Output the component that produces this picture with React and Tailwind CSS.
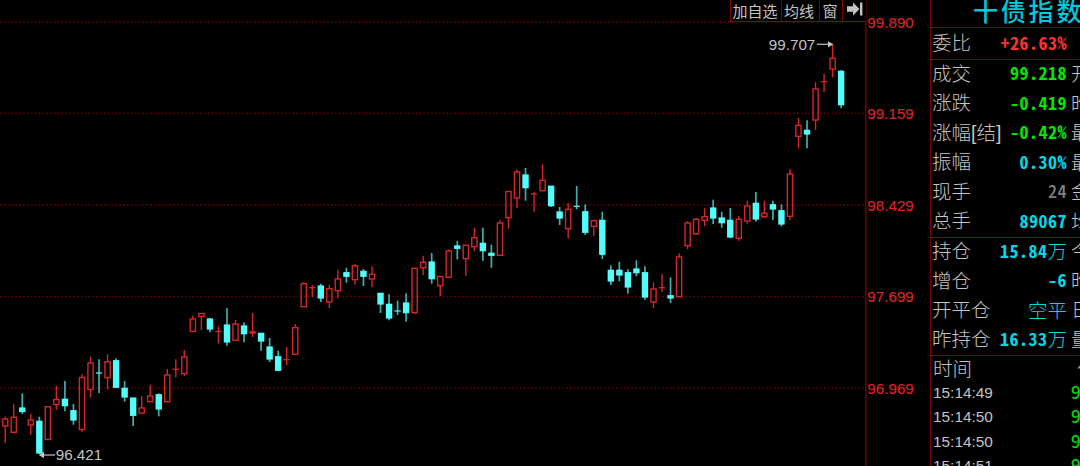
const STEP = 8.53;
const START_X = 5.2;

// [direction, high, body top, body bottom, low]
const candles = [
  ['u', 416.5, 419, 426, 443],
  ['u', 404.3, 417.3, 432.3, 433.5],
  ['d', 393.5, 408, 411.5, 414],
  ['u', 414, 420, 425, 434.7],
  ['d', 416.7, 421.3, 453, 454],
  ['u', 406, 406.8, 439.5, 439.5],
  ['u', 386, 399.5, 404.5, 410],
  ['d', 381, 399.3, 405.7, 411.3],
  ['d', 404, 410.7, 420, 424.7],
  ['u', 374, 377.5, 429.5, 432],
  ['u', 356.7, 363, 389.5, 397.7],
  ['d', 359.3, 373, 373, 393],
  ['u', 354.3, 361.7, 377.7, 389.3],
  ['d', 358.3, 360.7, 387.3, 387.3],
  ['d', 381, 388.3, 397, 401.7],
  ['d', 398, 398, 415.3, 426],
  ['u', 396, 408, 413, 413],
  ['u', 384.7, 396, 401.7, 401.7],
  ['d', 393.3, 394.7, 409, 416.3],
  ['u', 369, 375, 401.7, 401.7],
  ['u', 359.3, 369.3, 369.3, 377.3],
  ['u', 349.7, 357, 373.7, 375.7],
  ['u', 315.7, 319, 331.3, 332.3],
  ['u', 313.5, 313.5, 316.5, 330],
  ['d', 318, 319, 329, 332.3],
  ['u', 326.4, 331.4, 331.4, 343.5],
  ['d', 308, 325, 342, 345.7],
  ['u', 320, 324, 340.3, 340.3],
  ['d', 322.3, 326, 333.7, 342.3],
  ['u', 313, 331.8, 333, 337],
  ['d', 333.3, 333.3, 341, 350.7],
  ['d', 338, 347, 359, 362],
  ['d', 350.7, 356.7, 370.3, 370.3],
  ['u', 347, 359.7, 359.7, 365.3],
  ['u', 324, 327.7, 354.3, 354.3],
  ['u', 282.3, 283.7, 306.7, 306.7],
  ['u', 285, 287.7, 287.7, 297],
  ['d', 283.7, 286, 298, 302],
  ['u', 285, 288.7, 302, 308],
  ['u', 270.3, 279, 290.7, 298.3],
  ['d', 267.7, 272.7, 276.3, 282.7],
  ['u', 264, 265.7, 279.7, 284.7],
  ['d', 269, 271.3, 276.3, 286],
  ['u', 266.3, 274.3, 279, 287],
  ['d', 293.3, 293.3, 304, 313],
  ['d', 294.3, 304.3, 318, 320.3],
  ['d', 300.7, 311, 311, 315],
  ['d', 293.3, 303, 312.7, 321.7],
  ['u', 268, 268.3, 312.7, 313.7],
  ['u', 255.7, 262.3, 267.7, 275],
  ['d', 253, 262, 278.7, 283.7],
  ['u', 276.5, 276.5, 285.7, 296],
  ['u', 249.3, 251, 277.3, 277.3],
  ['d', 241, 246, 248.3, 259.3],
  ['u', 245, 245.3, 258.7, 276],
  ['u', 227.7, 237.7, 246.7, 251],
  ['d', 227.7, 243.3, 250.7, 260.7],
  ['d', 244.7, 253.3, 255.3, 267.7],
  ['u', 220, 223, 255.3, 255.3],
  ['u', 191.3, 191.5, 217.7, 228.7],
  ['u', 169.3, 172, 198, 208],
  ['d', 168, 175, 187.7, 200.7],
  ['u', 192.3, 194, 194, 211.7],
  ['u', 164.3, 180.3, 190.7, 190.7],
  ['d', 186.2, 186.2, 205.7, 207],
  ['d', 207, 212, 218, 225],
  ['u', 203, 209.3, 228.7, 238.3],
  ['d', 186, 206.3, 206.3, 209.3],
  ['d', 204.3, 211.7, 232.3, 235],
  ['u', 219.3, 220.7, 226.3, 236],
  ['d', 211.7, 220.3, 254.3, 259],
  ['d', 265.3, 270.3, 281, 285],
  ['d', 261.7, 270.3, 275, 281.3],
  ['d', 269.3, 272.7, 287, 293.7],
  ['d', 260.3, 269, 272.7, 276.3],
  ['d', 266.3, 272.7, 297, 299.7],
  ['u', 282.3, 289, 302, 308],
  ['u', 274, 287.7, 287.7, 292],
  ['d', 277.3, 295.7, 298, 303],
  ['u', 253.3, 257, 296.7, 296.7],
  ['u', 221, 223, 245.7, 249.3],
  ['u', 218, 219.3, 233.7, 235],
  ['u', 208.3, 216.7, 220.3, 226.3],
  ['d', 199.7, 208, 218, 224],
  ['d', 211.7, 218, 222.7, 227.7],
  ['d', 208, 220.3, 237, 238.3],
  ['u', 215.7, 219.3, 238.3, 240.7],
  ['u', 200.7, 206, 221, 223.7],
  ['d', 192, 203.3, 219, 221.7],
  ['u', 200.7, 213.3, 216.7, 218],
  ['d', 200.7, 204.7, 209, 220],
  ['d', 204.3, 210.7, 224, 226.3],
  ['u', 169, 174, 216.3, 220],
  ['u', 118, 125.3, 136.3, 148.3],
  ['d', 120.3, 130.3, 134, 148.3],
  ['u', 82.3, 89, 120, 130],
  ['u', 74, 81.7, 81.7, 92.3],
  ['u', 45, 58.3, 69, 77.3],
  ['d', 70.3, 71.3, 104.7, 108.3],
];

const levels = [
  { price: '99.890', y: 22 },
  { price: '99.159', y: 113.5 },
  { price: '98.429', y: 205 },
  { price: '97.699', y: 296.5 },
  { price: '96.969', y: 388 },
];

const quoteGroups = [
  {
    height: 'h-[32px] pt-[1px]',
    rows: [{ label: '委比', value: '+26.63%', color: 'font-bold text-[#ff3232]', next: '' }],
  },
  {
    height: 'h-[178px]',
    rows: [
      { label: '成交', value: '99.218', color: 'font-bold text-[#00e600]', next: '开' },
      { label: '涨跌', value: '-0.419', color: 'font-bold text-[#00e600]', next: '昨' },
      { label: '涨幅[结]', value: '-0.42%', color: 'font-bold text-[#00e600]', next: '最' },
      { label: '振幅', value: '0.30%', color: 'font-bold text-[#00d8e8]', next: '最' },
      { label: '现手', value: '24', color: 'font-medium text-[#808080]', next: '金' },
      { label: '总手', value: '89067', color: 'font-bold text-[#00d8e8]', next: '均' },
    ],
  },
  {
    height: 'h-[118px]',
    rows: [
      { label: '持仓', value: '15.84', unit: '万', color: 'font-bold text-[#00d8e8]', next: '今' },
      { label: '增仓', value: '-6', color: 'font-bold text-[#00d8e8]', next: '昨' },
      { label: '开平仓', value: '', unit: '空平', color: 'font-bold text-[#00d8e8]', next: '日' },
      { label: '昨持仓', value: '16.33', unit: '万', color: 'font-bold text-[#00d8e8]', next: '量' },
    ],
  },
];

const ticks = ['15:14:49', '15:14:50', '15:14:50', '15:14:51'];

function Candle({ index, data }) {
  const [dir, high, top, bottom, low] = data;
  const x = START_X + index * STEP;

  if (dir === 'd') {
    return (
      <g>
        <path d={`M${x} ${high}V${low}`} stroke="#3cb0b0" strokeWidth="1.7" />
        <rect x={x - 3.2} y={top - 0.6} width="6.4" height={bottom - top + 1.2} fill="#54fcfc" />
      </g>
    );
  }
  return (
    <g stroke="#d42626" strokeWidth="1.4" fill="none">
      <path d={`M${x} ${high}V${top}M${x} ${bottom}V${low}`} />
      {bottom - top < 1.5 ? (
        <path d={`M${x - 3.2} ${(top + bottom) / 2}h6.4`} strokeWidth={1.3 + bottom - top} />
      ) : (
        <rect x={x - 2.6} y={top} width="5.2" height={bottom - top} />
      )}
    </g>
  );
}

function Chart() {
  return (
    <svg
      width="930"
      height="466"
      viewBox="0 0 930 466"
      className="block font-['Liberation_Sans',sans-serif] text-[15.2px]"
    >
      {levels.map((level) => (
        <g key={level.price}>
          <path d={`M0 ${level.y}H865`} stroke="#6c0000" strokeWidth="1.3" strokeDasharray="1.6 2.25" />
          <text x="867.3" y={level.y + 5.7} fill="#d42626" stroke="#d42626" strokeWidth="0.2" textLength="46.5">
            {level.price}
          </text>
        </g>
      ))}
      <path d="M865.8 0V466" stroke="#6c0000" strokeWidth="1.6" />

      {candles.map((candle, i) => (
        <Candle key={i} index={i} data={candle} />
      ))}

      <text x="768.8" y="49.8" fill="#c4c4c4" textLength="46.5">99.707</text>
      <path d="M817 44.3H829" stroke="#c4c4c4" strokeWidth="1.2" />
      <path d="M828 41.2L833.5 44.3L828 47.4Z" fill="#c4c4c4" />

      <text x="55.7" y="460.4" fill="#c4c4c4" textLength="46.5">96.421</text>
      <path d="M43 455H55" stroke="#c4c4c4" strokeWidth="1.2" />
      <path d="M44 451.8L38.8 455L44 458.2Z" fill="#c4c4c4" />
    </svg>
  );
}

function Toolbar() {
  return (
    <div className="absolute left-[730px] top-0 flex h-[22px] w-[136px] border-b border-l border-[#800000] bg-black text-[15px] leading-[20px] text-[#c4c4c4]">
      <button type="button" className="w-[51px] border-r border-[#800000] pr-[2px]">加自选</button>
      <button type="button" className="w-[38px] border-r border-[#800000] pr-[3px]">均线</button>
      <button type="button" className="w-[23px] border-r border-[#800000] pr-[2px]">窗</button>
      <button type="button" className="flex flex-1 items-center justify-center pb-[3px]">
        <svg width="16" height="14" viewBox="0 0 16 14" fill="currentColor">
          <path d="M0 4.2H6V0.5L12.5 7L6 13.5V9.8H0Z" />
          <path d="M13 0.5H15.4V13.5H13Z" />
        </svg>
      </button>
    </div>
  );
}

function QuoteRow({ row }) {
  return (
    <div className="flex flex-1 items-center whitespace-nowrap pb-[2px]">
      <span className="pt-[1px] font-['Liberation_Sans','Noto_Sans_CJK_SC',sans-serif] font-light text-[#c4c4c4]">
        {row.label}
      </span>
      <span className={`ml-auto flex items-center ${row.color}`}>
        <span className="pb-[3px] text-[18px] tracking-[0.5px] [font-feature-settings:'hwid']">{row.value}</span>
        {row.unit && <span className="pb-[1px] font-light">{row.unit}</span>}
      </span>
      <span className="ml-[4px] w-[20px] shrink-0 pb-[2px] font-light text-[#c4c4c4]">{row.next}</span>
    </div>
  );
}

function QuotePanel() {
  return (
    <aside className="h-[466px] w-[150px] shrink-0 overflow-hidden border-l-[1.5px] border-[#780000] text-[19.5px] leading-none">
      <div className="w-[160px]">
        <h1 className="flex h-[27px] items-center whitespace-nowrap pb-[6px] pl-[42px] text-[25px] font-medium tracking-[2.8px] text-[#00c8dc]">
          十债指数
        </h1>
        {quoteGroups.map((group) => (
          <div
            key={group.rows[0].label}
            className={`flex flex-col border-t border-[#800000] pl-[1px] ${group.height}`}
          >
            {group.rows.map((row) => (
              <QuoteRow key={row.label} row={row} />
            ))}
          </div>
        ))}
        <div className="border-t border-[#800000] pl-[2px]">
          <div className="flex h-[25px] items-center whitespace-nowrap pb-[2px] font-light text-[#c4c4c4]">
            <span>时间</span>
            <span className="ml-[105px]">价</span>
          </div>
          {ticks.map((time, i) => (
            <div
              key={i}
              className="flex h-[24.3px] items-center pb-[1px] font-['Liberation_Sans',sans-serif] text-[15.4px] text-[#c4c4c4]"
            >
              <span className="w-[138px]">{time}</span>
              <span className="pb-[2px] font-['Noto_Sans_CJK_SC',sans-serif] text-[17px] font-medium text-[#00d800]">9</span>
            </div>
          ))}
        </div>
      </div>
    </aside>
  );
}

export default function App() {
  return (
    <main className="relative flex h-[466px] w-[1080px] overflow-hidden bg-black font-['Noto_Sans_CJK_SC',sans-serif]">
      <Chart />
      <Toolbar />
      <QuotePanel />
    </main>
  );
}
